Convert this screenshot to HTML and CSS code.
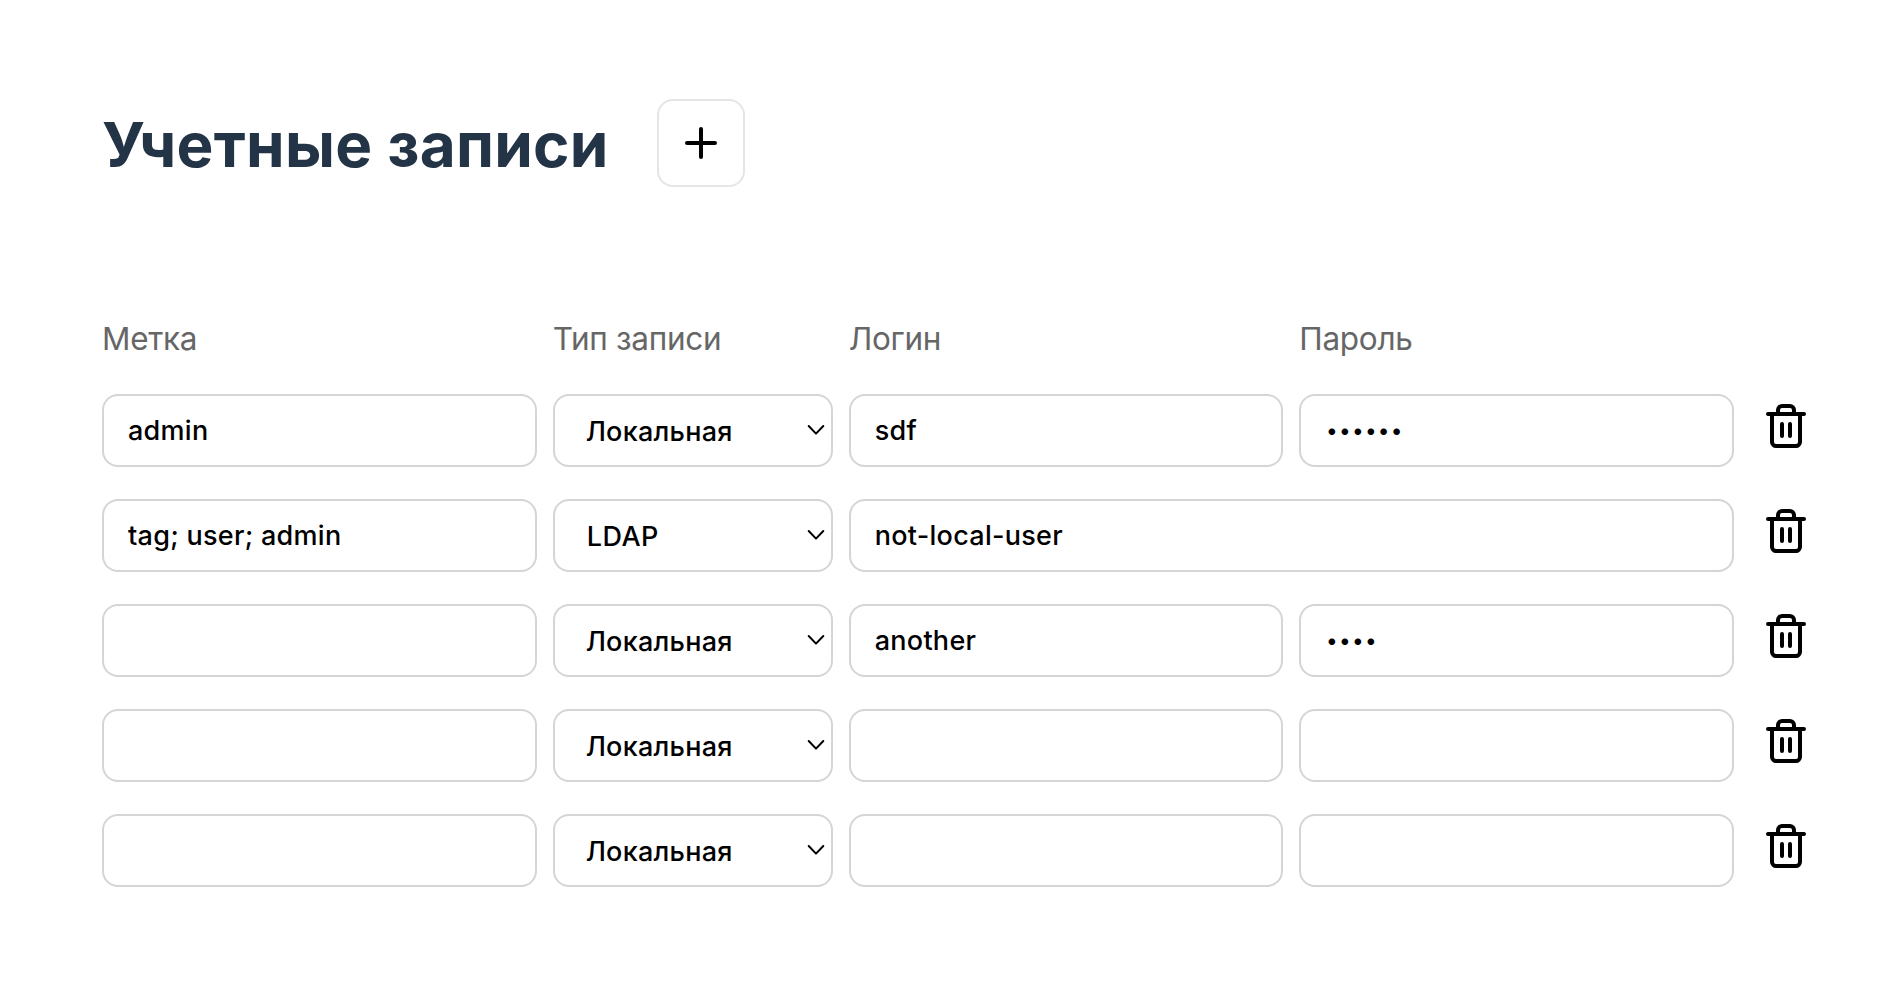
FILE: index.html
```html
<!DOCTYPE html>
<html lang="ru">
<head>
<meta charset="utf-8">
<title>Учетные записи</title>
<link rel="stylesheet" href="styles.css">
</head>
<body>
<svg class="sprite" aria-hidden="true">
  <symbol id="trash" viewBox="0 0 24 24">
    <path d="M3 6h18M19 6v14c0 1-1 2-2 2H7c-1 0-2-1-2-2V6M8 6V4c0-1 1-2 2-2h4c1 0 2 1 2 2v2M10 11v6M14 11v6"/>
  </symbol>
  <symbol id="chevron" viewBox="0 0 18 12">
    <path d="M1.7 2 9 9.6 16.3 2"/>
  </symbol>
</svg>
<main class="page">
  <header class="header">
    <h1 class="title">Учетные записи</h1>
    <button class="add" type="button" aria-label="Добавить">
      <svg class="add-icon" viewBox="0 0 36 36"><path d="M18 4v28M4 18h28"/></svg>
    </button>
  </header>
  <div class="row labels">
    <span>Метка</span><span>Тип записи</span><span>Логин</span><span>Пароль</span>
  </div>
  <div class="rows">
    <div class="row">
      <input class="field" type="text" value="admin">
      <div class="select-wrap"><select class="field select"><option>Локальная</option><option>LDAP</option></select><svg class="chevron"><use href="#chevron"/></svg></div>
      <input class="field" type="text" value="sdf">
      <input class="field password" type="password" value="secret">
      <button class="remove" type="button" aria-label="Удалить"><svg class="trash"><use href="#trash"/></svg></button>
    </div>
    <div class="row">
      <input class="field" type="text" value="tag; user; admin">
      <div class="select-wrap"><select class="field select ldap"><option>Локальная</option><option selected>LDAP</option></select><svg class="chevron"><use href="#chevron"/></svg></div>
      <input class="field wide" type="text" value="not-local-user">
      <button class="remove" type="button" aria-label="Удалить"><svg class="trash"><use href="#trash"/></svg></button>
    </div>
    <div class="row">
      <input class="field" type="text">
      <div class="select-wrap"><select class="field select"><option>Локальная</option><option>LDAP</option></select><svg class="chevron"><use href="#chevron"/></svg></div>
      <input class="field" type="text" value="another">
      <input class="field password" type="password" value="pass">
      <button class="remove" type="button" aria-label="Удалить"><svg class="trash"><use href="#trash"/></svg></button>
    </div>
    <div class="row">
      <input class="field" type="text">
      <div class="select-wrap"><select class="field select"><option>Локальная</option><option>LDAP</option></select><svg class="chevron"><use href="#chevron"/></svg></div>
      <input class="field" type="text">
      <input class="field password" type="password">
      <button class="remove" type="button" aria-label="Удалить"><svg class="trash"><use href="#trash"/></svg></button>
    </div>
    <div class="row">
      <input class="field" type="text">
      <div class="select-wrap"><select class="field select"><option>Локальная</option><option>LDAP</option></select><svg class="chevron"><use href="#chevron"/></svg></div>
      <input class="field" type="text">
      <input class="field password" type="password">
      <button class="remove" type="button" aria-label="Удалить"><svg class="trash"><use href="#trash"/></svg></button>
    </div>
  </div>
</main>
</body>
</html>
```
FILE: styles.css
```css
* { box-sizing: border-box; }
body {
  margin: 0;
  background: #fff;
  font-family: Inter, "Liberation Sans", sans-serif;
  color: #000;
}
.sprite { display: none; }
svg {
  fill: none;
  stroke: #000;
  stroke-linecap: round;
  stroke-linejoin: round;
}
.page { padding: 99px 94px 0 102px; }
.header { display: flex; align-items: center; height: 88px; gap: 50px; }
.title {
  margin: 0;
  padding-top: 3px;
  width: 505px;
  white-space: nowrap;
  font-size: 62px;
  font-weight: 700;
  line-height: 88px;
  letter-spacing: 0.25px;
  color: #243447;
}
.add {
  display: flex;
  align-items: center;
  justify-content: center;
  width: 88px;
  height: 88px;
  padding: 0;
  border: 2px solid #e5e5e5;
  border-radius: 16px;
  background: #fff;
}
.add-icon { width: 36px; height: 36px; stroke-width: 4; }
.row {
  display: grid;
  grid-template-columns: 1fr 280px 1fr 1fr 60px;
  column-gap: 16px;
  height: 73px;
}
.labels {
  height: 40px;
  margin-top: 132px;
  font-size: 31.5px;
  line-height: 40px;
  letter-spacing: -0.3px;
  color: #666;
}
.rows { display: flex; flex-direction: column; gap: 32px; margin-top: 35px; }
.field {
  width: 100%;
  height: 73px;
  padding: 0 24px;
  border: 2px solid #d5d5d5;
  border-radius: 16px;
  outline: none;
  background: #fff;
  font: 500 27px Inter, "Liberation Sans", sans-serif;
  letter-spacing: 0.28px;
  color: #000;
}
.wide { grid-column: span 2; }
.password {
  padding: 0 24px 0 25px;
  font-size: 21px;
  letter-spacing: 1.75px;
}
.select-wrap { position: relative; }
.select { appearance: none; padding: 1px 31px 0; letter-spacing: 0.25px; }
.ldap { padding-left: 32px; letter-spacing: 0.5px; }
.chevron {
  position: absolute;
  top: 30px;
  right: 8px;
  width: 18px;
  height: 12px;
  stroke-width: 2;
  pointer-events: none;
}
.remove {
  display: flex;
  justify-content: flex-start;
  padding: 8px 0 0 12px;
  border: 0;
  background: none;
}
.trash { width: 48px; height: 48px; stroke-width: 2; }
```
